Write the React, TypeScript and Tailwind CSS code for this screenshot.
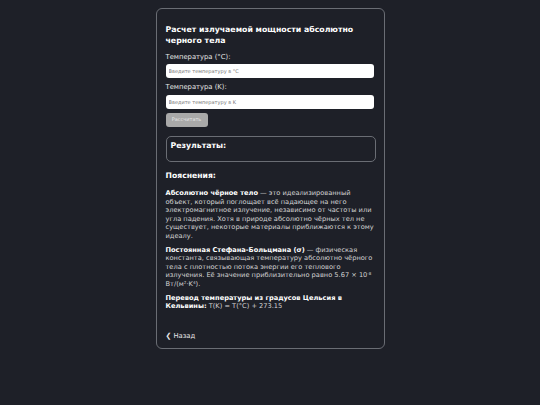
import { useState } from 'react';

export default function App() {
    const [celsius, setCelsius] = useState('');
    const [kelvin, setKelvin] = useState('');

    return (
        <div className="min-h-screen w-full bg-[#1e2028] flex justify-center pt-2 font-['DejaVu_Sans',sans-serif] text-[#e6e6e6]">
            <div className="w-[229px] h-[341px] border border-[#6a6d74] rounded-[6px] pl-[9px] pr-[8px] pt-[15px] flex flex-col">
                <h1 className="text-[7.8px] leading-[11px] font-bold text-white mb-[6px]">
                    Расчет излучаемой мощности абсолютно черного тела
                </h1>

                <label className="text-[6.8px] leading-[10px] mb-[2px]">Температура (°C):</label>
                <input
                    value={celsius}
                    onChange={(e) => setCelsius(e.target.value)}
                    placeholder="Введите температуру в °C"
                    className="w-[208px] h-[14px] bg-white rounded-[3px] px-[3px] text-[5px] text-black placeholder:text-[#777] outline-none mb-[4px]"
                />

                <label className="text-[6.8px] leading-[10px] mb-[3px]">Температура (K):</label>
                <input
                    value={kelvin}
                    onChange={(e) => setKelvin(e.target.value)}
                    placeholder="Введите температуру в K"
                    className="w-[208px] h-[14px] bg-white rounded-[3px] px-[3px] text-[5px] text-black placeholder:text-[#777] outline-none mb-[4px]"
                />

                <button
                    className="w-[42px] h-[14px] bg-[#a9a9a9] rounded-[3px] text-[5px] text-[#e8e8e8] mb-[9px]"
                    disabled
                >
                    Рассчитать
                </button>

                <div className="w-[210px] h-[26px] border border-[#6a6d74] rounded-[5px] px-[4px] pt-[4px] mb-[9px]">
                    <h2 className="text-[7.8px] leading-[10px] font-bold text-white">Результаты:</h2>
                </div>

                <h2 className="text-[7.7px] leading-[10px] font-bold text-white mb-[8px]">Пояснения:</h2>

                <div className="text-[6.65px] leading-[8.6px] text-[#d4d4d4] flex flex-col gap-[5px]">
                    <p>
                        <b className="text-white">Абсолютно чёрное тело</b> — это идеализированный объект, который поглощает всё падающее на него электромагнитное излучение, независимо от частоты или угла падения. Хотя в природе абсолютно чёрных тел не существует, некоторые материалы приближаются к этому идеалу.
                    </p>
                    <p>
                        <b className="text-white">Постоянная Стефана-Больцмана (σ)</b> — физическая константа, связывающая температуру абсолютно чёрного тела с плотностью потока энергии его теплового излучения. Её значение приблизительно равно 5.67 × 10<sup className="text-[4px]">-8</sup> Вт/(м²·K⁴).
                    </p>
                    <p>
                        <b className="text-white">Перевод температуры из градусов Цельсия в Кельвины:</b> T(K) = T(°C) + 273.15
                    </p>
                </div>

                <a href="#" className="mt-[21px] text-[6.8px] leading-[9px] text-[#e6e6e6] flex items-center gap-[2px]">
                    <span className="text-[7px] font-bold">❮</span> Назад
                </a>
            </div>
        </div>
    );
}
